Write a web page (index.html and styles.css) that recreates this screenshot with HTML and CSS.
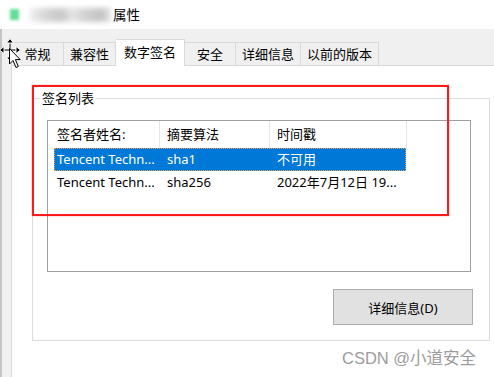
FILE: index.html
```html
<!DOCTYPE html>
<html lang="zh-CN">
<head>
<meta charset="utf-8">
<title>属性</title>
<link rel="stylesheet" href="styles.css">
</head>
<body>
<div class="titlebar">
  <span class="app-icon"></span>
  <span class="blur-name"></span>
  <span class="title">属性</span>
</div>
<div class="main">
  <div class="tabs">
    <div class="tab first">常规</div>
    <div class="tab">兼容性</div>
    <div class="tab active">数字签名</div>
    <div class="tab">安全</div>
    <div class="tab">详细信息</div>
    <div class="tab">以前的版本</div>
  </div>
  <div class="panel">
    <fieldset class="group">
      <legend>签名列表</legend>
      <div class="listview">
        <div class="lv-head">
          <div class="hc c1">签名者姓名:</div>
          <div class="hc c2">摘要算法</div>
          <div class="hc c3">时间戳</div>
        </div>
        <div class="lv-row selected">
          <div class="rc r1">Tencent Techn...</div>
          <div class="rc r2">sha1</div>
          <div class="rc r3">不可用</div>
        </div>
        <div class="lv-row">
          <div class="rc r1">Tencent Techn...</div>
          <div class="rc r2">sha256</div>
          <div class="rc r3">2022年7月12日 19...</div>
        </div>
      </div>
      <div class="btn-row">
        <button class="btn">详细信息(D)</button>
      </div>
    </fieldset>
  </div>
</div>
<div class="redbox"></div>
<div class="watermark">CSDN @小道安全</div>
<svg class="cursor" width="24" height="34" viewBox="0 0 24 34">
  <path d="M10 3 V21 M1 12 H19" stroke="#fff" stroke-width="3"/>
  <path d="M10 3 V21 M1 12 H19" stroke="#000" stroke-width="1"/>
  <path d="M10 0.5 L6.5 5 H13.5 Z M10 23.5 L6.5 19 H13.5 Z M-0.5 12 L4 8.5 V15.5 Z M20.5 12 L16 8.5 V15.5 Z" fill="#000" stroke="#fff" stroke-width="1"/>
  <path d="M9.5 10.5 V26 L13 22.5 L16 29.5 L18.3 28.5 L15.4 21.6 L20.2 21.6 Z" fill="#fff" stroke="#000" stroke-width="1" stroke-linejoin="round"/>
</svg>
</body>
</html>
```

FILE: styles.css
```css
html, body {
  margin: 0;
  padding: 0;
}
body {
  width: 494px;
  height: 377px;
  overflow: hidden;
  position: relative;
  background: #f0f0f0;
  font-family: "Noto Sans", "Noto Sans CJK SC", sans-serif;
  font-size: 13px;
  color: #000;
}

/* title bar */
.titlebar {
  height: 29px;
  background: #fff;
  display: flex;
  align-items: center;
  padding-left: 10px;
}
.app-icon {
  width: 9px;
  height: 11px;
  background: #62dc96;
  filter: blur(1.6px);
  margin-right: 11px;
}
.blur-name {
  width: 81px;
  height: 14px;
  margin-right: 2px;
  background: linear-gradient(90deg, #ececec 0%, #d2d2d2 20%, #c2c2c2 38%, #e2e2e2 52%, #cbcbcb 70%, #bdbdbd 88%, #e4e4e4 100%);
  filter: blur(2.6px);
  opacity: 0.9;
}
.title {
  font-size: 13.5px;
  line-height: 18px;
}

/* main area */
.main {
  border-left: 2px solid #c6c6c6;
  padding: 13px 0 0 9px;
}
.tabs {
  display: flex;
  align-items: flex-end;
  height: 23px;
}
.tab {
  box-sizing: border-box;
  height: 23px;
  min-width: 51px;
  padding: 0 6px;
  text-align: center;
  line-height: 22px;
  background: #f0f0f0;
  border-top: 1px solid #d9d9d9;
  border-right: 1px solid #d9d9d9;
  white-space: nowrap;
}
.tab.first {
  border-left: 1px solid #d9d9d9;
  min-width: 53px;
}
.tab.active {
  height: 27px;
  margin-bottom: -1px;
  padding: 0 8px;
  line-height: 25px;
  background: #fff;
  position: relative;
  z-index: 1;
}

.panel {
  box-sizing: border-box;
  height: 312px;
  background: #fff;
  border-top: 1px solid #d9d9d9;
  border-left: 1px solid #d9d9d9;
}

.group {
  box-sizing: border-box;
  width: 458px;
  min-width: 0;
  margin: 24px 0 0 20px;
  padding: 14px 16px 15px 14px;
  border: 1px solid #dcdcdc;
}
.group legend {
  padding: 0 2px;
  margin-left: -7px;
  line-height: 16px;
  font-size: 13px;
}

.listview {
  box-sizing: border-box;
  width: 424px;
  height: 152px;
  border: 1px solid #a0a0a0;
  background: #fff;
}
.lv-head {
  display: flex;
  height: 27px;
}
.hc {
  box-sizing: border-box;
  border-right: 1px solid #e5e5e5;
  padding-left: 7px;
  line-height: 27px;
  white-space: nowrap;
}
.hc.c1 { width: 112px; padding-left: 9px; }
.hc.c2 { width: 110px; }
.hc.c3 { width: 137px; }

.lv-row {
  display: flex;
  height: 23px;
  width: 352px;
  margin-left: 6px;
  line-height: 23px;
}
.rc {
  box-sizing: border-box;
  white-space: nowrap;
  overflow: hidden;
  padding-left: 7px;
}
.rc.r1 { width: 106px; padding-left: 3px; }
.rc.r2 { width: 110px; }
.rc.r3 { width: 136px; }
.lv-row.selected {
  background: #0078d7;
  color: #fff;
  outline: 1px dotted #e9a25c;
  outline-offset: -1px;
}

.btn-row {
  display: flex;
  justify-content: flex-end;
  margin-top: 17px;
}
.btn {
  box-sizing: border-box;
  width: 140px;
  height: 36px;
  background: #e1e1e1;
  border: 1px solid #adadad;
  font-family: "Noto Sans", "Noto Sans CJK SC", sans-serif;
  font-size: 13px;
  color: #000;
  padding: 0;
}

/* overlays */
.redbox {
  position: absolute;
  left: 32px;
  top: 85px;
  width: 417px;
  height: 131px;
  box-sizing: border-box;
  border: 2px solid #ff1a1a;
  box-shadow: 0 0 1px rgba(255, 0, 0, 0.6);
}
.watermark {
  position: absolute;
  left: 342px;
  top: 347px;
  font-family: "Liberation Sans", "Noto Sans CJK SC", sans-serif;
  font-size: 16.5px;
  line-height: 22px;
  color: #9c9c9c;
  white-space: nowrap;
}
.cursor {
  position: absolute;
  left: 0;
  top: 38px;
  z-index: 5;
}
```
